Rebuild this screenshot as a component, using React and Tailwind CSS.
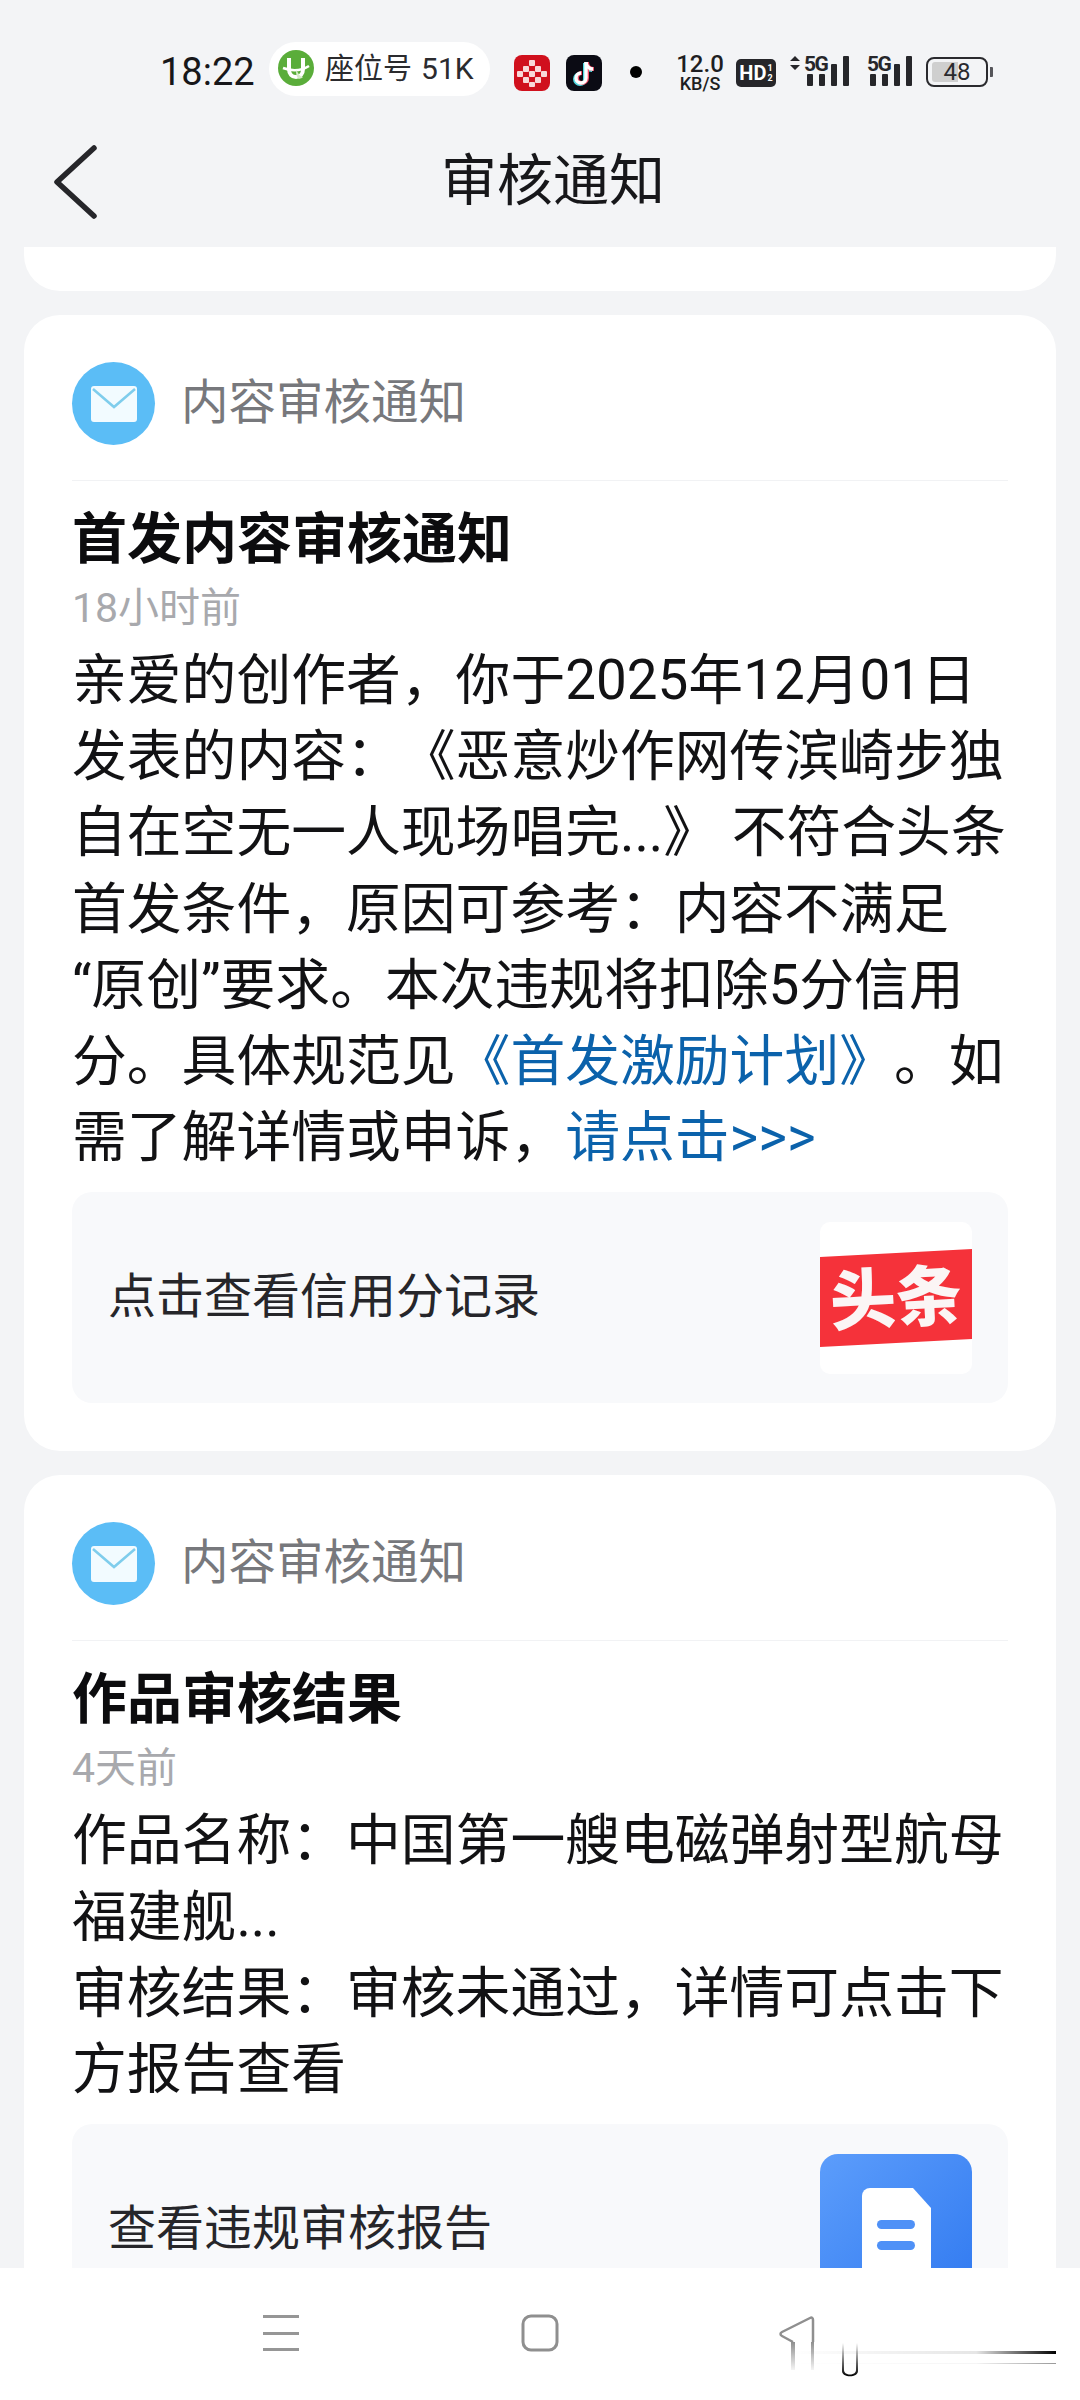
import React from "react";

const cjk = "font-['Roboto','Noto_Sans_CJK_SC',sans-serif]";

const Bars = () => (
  <svg width="48" height="32" viewBox="0 0 48 32" className="block">
    <rect x="0" y="18" width="6" height="12" rx="1" fill="#26262a" />
    <rect x="12" y="18" width="6" height="12" rx="1" fill="#26262a" />
    <rect x="24" y="8" width="6" height="22" rx="1" fill="#26262a" />
    <rect x="36" y="0" width="6" height="30" rx="1" fill="#26262a" />
  </svg>
);

const StatusBar = () => (
  <div className="h-[120px] pt-[42px] pl-[160px] flex items-start shrink-0">
    <span className="w-[109px] h-[54px] leading-[60px] text-[38px] text-[#17171a] font-['Roboto',sans-serif]">18:22</span>
    <div className="w-[221px] h-[54px] rounded-full bg-white flex items-center pl-[9px]">
      <svg width="36" height="36" viewBox="0 0 36 36" className="shrink-0 -mt-[2px]">
        <circle cx="18" cy="18" r="18" fill="#5aad3a" />
        <path d="M11 8v11c0 5 3 8 7 8s7-3 7-8V8" fill="none" stroke="#fff" strokeWidth="4" />
        <path d="M5 18c8 3 18 3 26-2" fill="none" stroke="#fff" strokeWidth="2.5" />
        <path d="M18 20c3 4 4 7 7 7-3 3-7 3-7-7z" fill="#d5ecc9" />
      </svg>
      <span className={`ml-[11px] text-[29px] leading-none text-[#2b2b2e] ${cjk}`}>座位号</span>
      <span className="ml-[9px] text-[30px] leading-none text-[#2b2b2e] font-['Roboto',sans-serif]">51K</span>
    </div>
    <svg width="36" height="36" viewBox="0 0 36 36" className="ml-[24px] mt-[13px] shrink-0">
      <rect width="36" height="36" rx="8" fill="#d0101d" />
      <g fill="#f8d8d8">
        <rect x="15" y="5" width="6" height="6" rx="1" />
        <rect x="9" y="11" width="6" height="6" rx="1" />
        <rect x="21" y="11" width="6" height="6" rx="1" />
        <rect x="3" y="16" width="6" height="6" rx="1" />
        <rect x="15" y="16" width="6" height="6" rx="1" />
        <rect x="27" y="16" width="6" height="6" rx="1" />
        <rect x="9" y="22" width="6" height="6" rx="1" />
        <rect x="21" y="22" width="6" height="6" rx="1" />
        <rect x="15" y="27" width="6" height="5" rx="1" />
      </g>
    </svg>
    <svg width="36" height="36" viewBox="0 0 36 36" className="ml-[16px] mt-[13px] shrink-0">
      <rect width="36" height="36" rx="8" fill="#0b0b14" />
      <path d="M20 7v16a5 5 0 1 1-5-5" fill="none" stroke="#4fd8e0" strokeWidth="4" transform="translate(-1 1)" />
      <path d="M20 7c0 4 3 7 7 7" fill="none" stroke="#4fd8e0" strokeWidth="4" transform="translate(-1 1)" />
      <path d="M20 7v16a5 5 0 1 1-5-5" fill="none" stroke="#f0526a" strokeWidth="4" transform="translate(1 0)" />
      <path d="M20 7c0 4 3 7 7 7" fill="none" stroke="#f0526a" strokeWidth="4" transform="translate(1 0)" />
      <path d="M20 7v16a5 5 0 1 1-5-5" fill="none" stroke="#fff" strokeWidth="3.4" />
      <path d="M20 7c0 4 3 7 7 7" fill="none" stroke="#fff" strokeWidth="3.4" />
    </svg>
    <span className="ml-[28px] mt-[24px] w-[12px] h-[12px] rounded-full bg-black shrink-0" />
    <div className="ml-[35px] mt-[10px] w-[46px] flex flex-col items-center font-['Roboto',sans-serif] text-[#1e1e22] shrink-0">
      <span className="text-[24px] leading-[24px] font-medium">12.0</span>
      <span className="text-[18px] leading-[15px] font-medium">KB/S</span>
    </div>
    <div className="ml-[13px] mt-[17px] w-[40px] h-[28px] rounded-[5px] bg-[#26262a] text-white flex items-center justify-center font-['Roboto',sans-serif] font-bold shrink-0">
      <span className="text-[20px] leading-none">HD</span>
      <span className="flex flex-col text-[9px] leading-[10px] ml-[1px]">
        <span>1</span>
        <span>2</span>
      </span>
    </div>
    <div className="ml-[14px] mt-[14px] relative w-[60px] h-[32px] shrink-0">
      <svg width="10" height="14" viewBox="0 0 10 14" className="absolute left-0 top-0">
        <path d="M5 0l5 5H0zM5 14L0 9h10z" fill="#26262a" />
      </svg>
      <span className="absolute left-[14px] -top-[2px] text-[21px] leading-none font-bold text-[#26262a] font-['Roboto',sans-serif] tracking-[-1.5px]">5G</span>
      <div className="absolute left-[17px] top-0">
        <Bars />
      </div>
    </div>
    <div className="ml-[17px] mt-[14px] relative w-[46px] h-[32px] shrink-0">
      <span className="absolute left-0 -top-[2px] text-[21px] leading-none font-bold text-[#26262a] font-['Roboto',sans-serif] tracking-[-1.5px]">5G</span>
      <div className="absolute left-[3px] top-0">
        <Bars />
      </div>
    </div>
    <div className="ml-[13px] mt-[15px] w-[62px] h-[30px] rounded-[8px] border-[2px] border-[#2a2a2e] relative flex items-center justify-center shrink-0 p-[3px]">
      <div className="absolute left-[4px] top-[3px] bottom-[3px] w-[26px] bg-[#cfcfcf] rounded-l-[3px]" />
      <span className="relative text-[24px] leading-none text-[#2a2a2e] font-['Roboto',sans-serif]">48</span>
    </div>
    <span className="ml-[2px] mt-[25px] w-[3px] h-[10px] bg-[#55555a] rounded-r-[1px] shrink-0" />
  </div>
);

const Header = () => (
  <div className="h-[127px] shrink-0 flex items-center">
    <svg width="52" height="80" viewBox="0 0 52 80" className="ml-[50px] -mt-[5px] shrink-0">
      <path d="M44 7L7 41l37 34" fill="none" stroke="#26262a" strokeWidth="5.5" strokeLinecap="round" strokeLinejoin="round" />
    </svg>
    <h1 className={`ml-[339px] text-[56px] leading-none font-normal text-[#17171a] -mt-[5px] ${cjk}`}>审核通知</h1>
  </div>
);

const CardHead = () => (
  <div className="h-[166px] pt-[47px] border-b border-[#f1f2f4] flex items-start shrink-0">
    <div className="w-[83px] h-[83px] rounded-full bg-[#5bbdf6] flex items-center justify-center shrink-0">
      <svg width="46" height="36" viewBox="0 0 46 36">
        <rect width="46" height="36" rx="3" fill="#f2fbff" />
        <path d="M2 3l21 18L44 3" fill="none" stroke="#7fcdec" strokeWidth="2.5" />
      </svg>
    </div>
    <span className={`ml-[26px] text-[47.5px] leading-[83px] text-[#77787c] ${cjk}`}>内容审核通知</span>
  </div>
);

const Link = ({ children }) => <span className="text-[#0b62ab]">{children}</span>;

const Card = ({ title, time, lines, action, icon }) => (
  <div className="rounded-[36px] bg-white px-[48px] pb-[48px] shrink-0">
    <CardHead />
    <h2 className={`mt-[25px] text-[55px] leading-[66px] font-bold text-[#0c0c0e] ${cjk}`}>{title}</h2>
    <p className={`mt-[6px] text-[41px] leading-[60px] text-[#a8a9ad] ${cjk}`}>{time}</p>
    <div className={`mt-[4px] text-[54.8px] leading-[76.2px] text-[#121214] ${cjk}`}>
      {lines.map((line, idx) => (
        <div key={idx} className="whitespace-nowrap">{line}</div>
      ))}
    </div>
    <div className={`mt-[17px] h-[211px] rounded-[20px] bg-[#f8f9fb] px-[36px] pt-[30px] flex items-start justify-between ${cjk}`}>
      <span className="text-[48px] leading-[150px] text-[#26262a]">{action}</span>
      {icon}
    </div>
  </div>
);

const ToutiaoLogo = () => (
  <svg width="152" height="152" viewBox="0 0 152 152" className="shrink-0">
    <rect width="152" height="152" rx="10" fill="#ffffff" />
    <polygon points="0,35 152,27 152,117 0,125" fill="#f5323a" />
    <text
      x="76"
      y="100"
      textAnchor="middle"
      fontSize="66"
      fontWeight="900"
      fill="#fbf5f5"
      fontFamily="'Noto Sans CJK SC', sans-serif"
      transform="rotate(-3 76 76)"
    >
      头条
    </text>
  </svg>
);

const ReportIcon = () => (
  <svg width="152" height="152" viewBox="0 0 152 152" className="shrink-0">
    <defs>
      <linearGradient id="reportBlue" x1="0" y1="0" x2="1" y2="1">
        <stop offset="0" stopColor="#5c9dfb" />
        <stop offset="1" stopColor="#3079f0" />
      </linearGradient>
    </defs>
    <rect width="152" height="152" rx="18" fill="url(#reportBlue)" />
    <path d="M42 42a8 8 0 0 1 8-8h43l18 20v98H42z" fill="#fff" />
    <rect x="57" y="66" width="38" height="9" rx="4.5" fill="#4f91f7" />
    <rect x="57" y="87" width="38" height="9" rx="4.5" fill="#4f91f7" />
  </svg>
);

const NavBar = () => (
  <div className="h-[132px] bg-white shrink-0">
    <svg width="1080" height="132" viewBox="0 0 1080 132" className="block">
      <defs>
        <linearGradient id="fadeDown" x1="0" y1="0" x2="0" y2="1">
          <stop offset="0" stopColor="#8f8f8f" />
          <stop offset="1" stopColor="#8f8f8f" stopOpacity="0.1" />
        </linearGradient>
        <linearGradient id="fadeBlack" x1="0" y1="0" x2="0" y2="1">
          <stop offset="0" stopColor="#000" stopOpacity="0" />
          <stop offset="1" stopColor="#000" />
        </linearGradient>
        <linearGradient id="fadeRight" x1="0" y1="0" x2="1" y2="0">
          <stop offset="0" stopColor="#000" stopOpacity="0" />
          <stop offset="0.7" stopColor="#000" stopOpacity="0.1" />
          <stop offset="1" stopColor="#000" />
        </linearGradient>
      </defs>
      <g fill="#969696">
        <rect x="263" y="47" width="36" height="3" />
        <rect x="263" y="64" width="36" height="3" />
        <rect x="263" y="80" width="36" height="3" />
      </g>
      <rect x="523" y="48" width="34" height="34" rx="8" fill="none" stroke="#8f8f8f" strokeWidth="3" />
      <path d="M793 74L782 68c-2-1-2-3 0-4l28-14c2-1 3 0 3 2v22" fill="none" stroke="#8f8f8f" strokeWidth="2.5" />
      <rect x="791" y="74" width="4" height="28" fill="url(#fadeDown)" />
      <rect x="811" y="74" width="3" height="28" fill="url(#fadeDown)" />
      <path d="M842 75h2v27c0 6 12 6 12 0V75h2v28c0 7-16 7-16 0z" fill="url(#fadeBlack)" />
      <rect x="790" y="83" width="266" height="3" fill="url(#fadeRight)" />
      <rect x="790" y="95" width="266" height="1" fill="url(#fadeRight)" opacity="0.4" />
    </svg>
  </div>
);

export default function App() {
  return (
    <div className="w-[1080px] h-[2400px] bg-[#f3f4f6] flex flex-col overflow-hidden [text-spacing-trim:space-all]">
      <StatusBar />
      <Header />
      <main className="flex-1 min-h-0 overflow-hidden px-[24px] flex flex-col gap-[24px]">
        <div className="h-[44px] bg-white rounded-b-[36px] shrink-0" />
        <Card
          title="首发内容审核通知"
          time="18小时前"
          lines={[
            "亲爱的创作者，你于2025年12月01日",
            "发表的内容：《恶意炒作网传滨崎步独",
            "自在空无一人现场唱完...》 不符合头条",
            "首发条件，原因可参考：内容不满足",
            "“原创”要求。本次违规将扣除5分信用",
            <>分。具体规范见<Link>《首发激励计划》</Link>。如</>,
            <>需了解详情或申诉，<Link>请点击&gt;&gt;&gt;</Link></>,
          ]}
          action="点击查看信用分记录"
          icon={<ToutiaoLogo />}
        />
        <Card
          title="作品审核结果"
          time="4天前"
          lines={[
            "作品名称：中国第一艘电磁弹射型航母",
            "福建舰...",
            "审核结果：审核未通过，详情可点击下",
            "方报告查看",
          ]}
          action="查看违规审核报告"
          icon={<ReportIcon />}
        />
      </main>
      <NavBar />
    </div>
  );
}
